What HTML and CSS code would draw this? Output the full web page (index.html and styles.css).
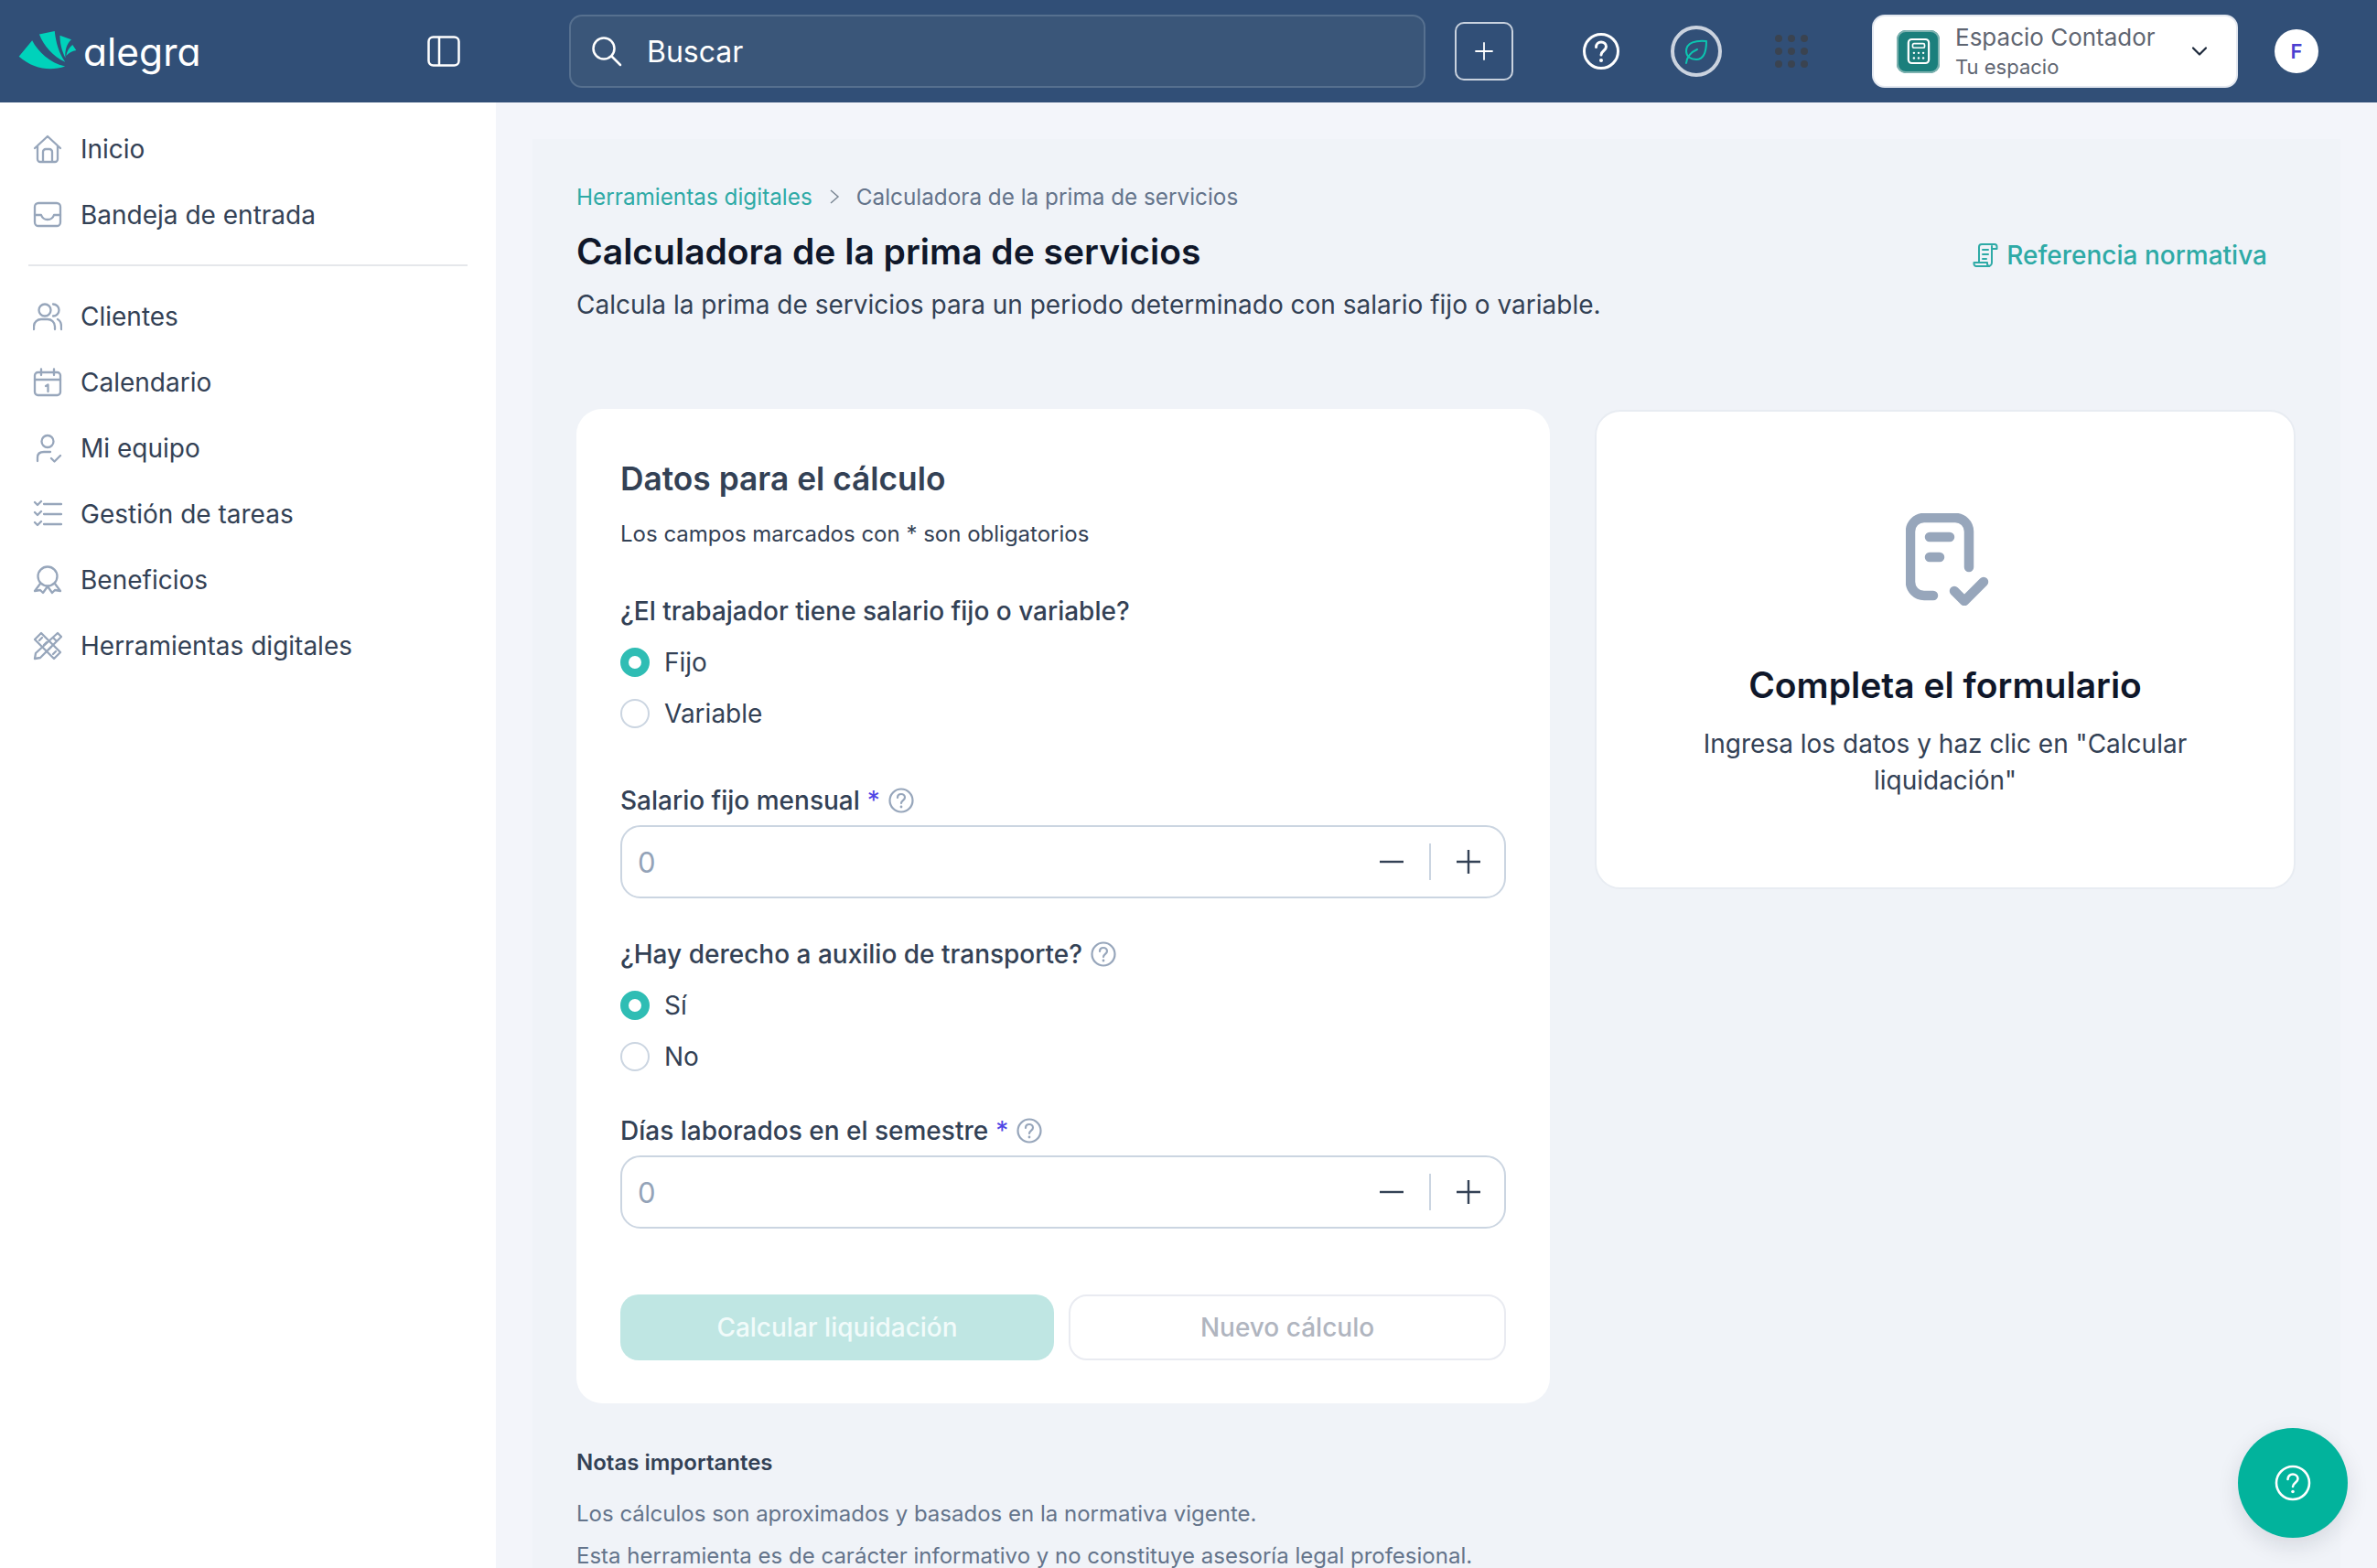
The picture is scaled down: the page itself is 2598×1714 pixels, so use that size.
FILE: index.html
```html
<!DOCTYPE html>
<html lang="es">
<head>
<meta charset="utf-8">
<title>Calculadora de la prima de servicios</title>
<link rel="stylesheet" href="styles.css">
</head>
<body>
<header class="topbar">
  <div class="brand">
    <svg class="brand-mark" viewBox="60 105 190 130"><path fill="#00d2bb" d="M62 190 105 138C125 175 160 210 212 222 165 238 110 232 62 190Z"/><path fill="#00d2bb" d="M128 118 178 108C182 145 192 180 212 208 172 190 143 155 128 118Z"/><path fill="#00d2bb" d="M195 122 232 135C218 148 210 170 213 195 200 170 195 145 195 122Z"/><path fill="#00d2bb" d="M236 152 248 170C235 172 225 178 215 188 218 172 226 160 236 152Z"/></svg>
    <span class="brand-name">alegra</span>
  </div>
  <button class="collapse" aria-label="Menú">
    <svg viewBox="0 0 36 36" class="i36"><rect x="1.5" y="2.5" width="33" height="31" rx="5" fill="none" stroke="#fff" stroke-width="2.5"/><path d="M13 3v30" stroke="#fff" stroke-width="2.5"/></svg>
  </button>
  <div class="search">
    <svg viewBox="0 0 36 36" class="i36"><circle cx="15" cy="15" r="11.5" fill="none" stroke="#fff" stroke-width="2.5"/><path d="M23.5 23.5 33 33" stroke="#fff" stroke-width="2.5" stroke-linecap="round"/></svg>
    <span>Buscar</span>
  </div>
  <button class="add" aria-label="Nuevo"><svg viewBox="0 0 24 24" class="i24"><path d="M12 3v18M3 12h18" stroke="#fff" stroke-width="1.8" stroke-linecap="round"/></svg></button>
  <svg viewBox="0 0 42 42" class="help"><circle cx="21" cy="21" r="18.5" fill="none" stroke="#fff" stroke-width="3"/><path d="M15.5 16.5c0-3.4 2.4-5.5 5.5-5.5s5.5 2 5.5 5c0 4.500-5.500 4.500-5.500 9" fill="none" stroke="#fff" stroke-width="3" stroke-linecap="round"/><circle cx="21" cy="31" r="2" fill="#fff"/></svg>
  <div class="leaf"><svg viewBox="0 0 28 28" class="i28"><path d="M25 3C14 2 3 4 3 14c0 6 5 9 11 9 9 0 11-10 11-20z" fill="none" stroke="#0cc5b0" stroke-width="2" stroke-linejoin="round"/><path d="M3 27c1-8 5-12 12-15" fill="none" stroke="#0cc5b0" stroke-width="2" stroke-linecap="round"/></svg></div>
  <div class="apps"><i></i><i></i><i></i><i></i><i></i><i></i><i></i><i></i><i></i></div>
  <div class="workspace">
    <div class="ws-icon"><svg viewBox="0 0 28 32" width="26" height="30"><rect x="2" y="2" width="24" height="28" rx="4" fill="none" stroke="#fff" stroke-width="2.400"/><rect x="7" y="7" width="14" height="5" rx="1.500" fill="none" stroke="#fff" stroke-width="1.800"/><g fill="#fff"><circle cx="8.500" cy="18" r="1.300"/><circle cx="14" cy="18" r="1.300"/><circle cx="19.500" cy="18" r="1.300"/><circle cx="8.500" cy="24" r="1.300"/><circle cx="14" cy="24" r="1.300"/><circle cx="19.500" cy="24" r="1.300"/></g></svg></div>
    <div class="ws-text"><span class="ws-title">Espacio Contador</span><span class="ws-sub">Tu espacio</span></div>
    <svg viewBox="0 0 20 20" class="chev"><path d="M3 6.500 10 13.500 17 6.500" fill="none" stroke="#1e2a3c" stroke-width="2.200" stroke-linecap="round" stroke-linejoin="round"/></svg>
  </div>
  <div class="avatar">F</div>
</header>

<div class="shell">
  <nav class="sidebar">
    <a class="nav-item"><svg viewBox="0 0 32 32" class="nav-ico"><path d="M2 15 16 2l14 13M5 12.500V27a3 3 0 0 0 3 3h16a3 3 0 0 0 3-3V12.500M11 30V19a3 3 0 0 1 3-3h4a3 3 0 0 1 3 3v11"/></svg>Inicio</a>
    <a class="nav-item"><svg viewBox="0 0 32 32" class="nav-ico"><rect x="2" y="3" width="28" height="25" rx="4"/><path d="M2 16h7c1 3 3 5 7 5s6-2 7-5h7"/></svg>Bandeja de entrada</a>
    <hr class="nav-rule">
    <a class="nav-item"><svg viewBox="0 0 32 32" class="nav-ico"><circle cx="13" cy="9" r="6.500"/><path d="M22 2.500a6.500 6.500 0 0 1 0 13M1 30v-3c0-5 4-8 8-8h7c4 0 8 3 8 8v3M27 19c2 1 4 4 4 8v3"/></svg>Clientes</a>
    <a class="nav-item"><svg viewBox="0 0 32 32" class="nav-ico"><rect x="2" y="5" width="28" height="25" rx="3.500"/><path d="M2 13h28M9 1.500V8M23 1.500V8M14 20l2.500-1.500V26"/></svg>Calendario</a>
    <a class="nav-item"><svg viewBox="0 0 32 32" class="nav-ico"><circle cx="16" cy="8.500" r="6.500"/><path d="M5 30v-4c0-4 3-6 7-6h7M20 27l3.500 3.500L30 24"/></svg>Mi equipo</a>
    <a class="nav-item"><svg viewBox="0 0 32 32" class="nav-ico"><path d="M12 5h19M12 16h19M12 27h19M2 3l3 3 4-4M2 14l3 3 4-4M2 25l3 3 4-4"/></svg>Gestión de tareas</a>
    <a class="nav-item"><svg viewBox="0 0 32 32" class="nav-ico"><circle cx="16" cy="12" r="10.500"/><path d="M8 20 2 28l6-1 3 3 5-7 5 7 3-3 6 1-6-8"/></svg>Beneficios</a>
    <a class="nav-item"><svg viewBox="0 0 32 32" class="nav-ico"><path d="M27 2l4 4L8 29l-6 1 1-6zM22 7l4 4"/><path d="M9 2 2 9l21 21 7-7zM7 10l3-3M12 15l3-3M17 20l3-3M22 25l3-3"/></svg>Herramientas digitales</a>
  </nav>

  <main class="main">
    <div class="panel">
    <div class="page-head">
      <div class="head-text">
        <div class="crumbs"><a class="crumb-link">Herramientas digitales</a><svg viewBox="0 0 12 18" class="crumb-sep"><path d="M2 2l8 7-8 7" fill="none" stroke="#7b8794" stroke-width="1.500"/></svg><span>Calculadora de la prima de servicios</span></div>
        <h1>Calculadora de la prima de servicios</h1>
        <p class="lead">Calcula la prima de servicios para un periodo determinado con salario fijo o variable.</p>
      </div>
      <a class="ref-link"><svg viewBox="0 0 28 28" class="i28"><path d="M7 22V5a3 3 0 0 1 3-3h14a2.500 2.500 0 0 1 2.500 2.500V7H21M21 4v18a4 4 0 0 1-4 4H4a2.500 2.500 0 0 1-2.500-2.500V22H16v1.500a2.500 2.500 0 0 0 2.500 2.500M11 8h6M11 13h6M11 18h4" fill="none" stroke="#2eaaa6" stroke-width="2" stroke-linecap="round" stroke-linejoin="round"/></svg>Referencia normativa</a>
    </div>

    <div class="columns">
      <div class="column-left">
        <section class="card form-card">
          <h2>Datos para el cálculo</h2>
          <p class="hint">Los campos marcados con * son obligatorios</p>

          <div class="label first">¿El trabajador tiene salario fijo o variable?</div>
          <div class="radios">
            <div class="radio on"><span class="dot"></span>Fijo</div>
            <div class="radio"><span class="dot"></span>Variable</div>
          </div>

          <div class="label gap-a">Salario fijo mensual <span class="req">*</span><svg viewBox="0 0 28 28" class="q"><use href="#qmark"/></svg></div>
          <div class="number"><span class="zero">0</span><span class="steps"><svg viewBox="0 0 28 28" class="i28"><path d="M1 14h26" stroke="#334155" stroke-width="2.400"/></svg><i></i><svg viewBox="0 0 28 28" class="i28"><path d="M1 14h26M14 1v26" stroke="#334155" stroke-width="2.400"/></svg></span></div>

          <div class="label gap-b">¿Hay derecho a auxilio de transporte?<svg viewBox="0 0 28 28" class="q"><use href="#qmark"/></svg></div>
          <div class="radios">
            <div class="radio on"><span class="dot"></span>Sí</div>
            <div class="radio"><span class="dot"></span>No</div>
          </div>

          <div class="label gap-c">Días laborados en el semestre <span class="req">*</span><svg viewBox="0 0 28 28" class="q"><use href="#qmark"/></svg></div>
          <div class="number"><span class="zero">0</span><span class="steps"><svg viewBox="0 0 28 28" class="i28"><path d="M1 14h26" stroke="#334155" stroke-width="2.400"/></svg><i></i><svg viewBox="0 0 28 28" class="i28"><path d="M1 14h26M14 1v26" stroke="#334155" stroke-width="2.400"/></svg></span></div>

          <div class="actions">
            <button class="btn primary">Calcular liquidación</button>
            <button class="btn ghost">Nuevo cálculo</button>
          </div>
        </section>
        <section class="notes">
          <h3>Notas importantes</h3>
          <p>Los cálculos son aproximados y basados en la normativa vigente.</p>
          <p>Esta herramienta es de carácter informativo y no constituye asesoría legal profesional.</p>
        </section>
      </div>
      <aside class="card empty-card">
        <svg viewBox="0 0 91 101" class="doc"><path d="M30 90H20A15 15 0 0 1 5 75V20A15 15 0 0 1 20 5H54A15 15 0 0 1 69 20V59M26 26H48M26 48H37M53 85 64 96 85 75" fill="none" stroke="#97a6bb" stroke-width="10.500" stroke-linecap="round" stroke-linejoin="round"/></svg>
        <h2 class="empty-title">Completa el formulario</h2>
        <p class="empty-text">Ingresa los datos y haz clic en "Calcular liquidación"</p>
      </aside>
    </div>
    </div>
  </main>
</div>

<button class="fab" aria-label="Ayuda"><svg viewBox="0 0 40 40" class="fab-ico"><circle cx="20" cy="20" r="18" fill="none" stroke="#fff" stroke-width="2.600"/><path d="M14.500 16c0-3.500 2.500-5.500 5.500-5.500s5.500 2 5.500 5c0 4-5.500 4.500-5.500 8.500" fill="none" stroke="#fff" stroke-width="2.600" stroke-linecap="round"/><circle cx="20" cy="29.500" r="1.800" fill="#fff"/></svg></button>

<svg class="defs" aria-hidden="true"><defs><g id="qmark"><circle cx="14" cy="14" r="12.500" fill="none" stroke="#97a6bb" stroke-width="2.200"/><path d="M10 11c0-2.600 1.800-4 4-4s4 1.500 4 3.700c0 3-4 3.300-4 6.300" fill="none" stroke="#97a6bb" stroke-width="2.200" stroke-linecap="round"/><circle cx="14" cy="21" r="1.400" fill="#97a6bb"/></g></defs></svg>
</body>
</html>
```
FILE: styles.css
```css
* { box-sizing: border-box; }
html, body { margin: 0; padding: 0; }
body {
  width: 2598px;
  height: 1714px;
  overflow: hidden;
  position: relative;
  font-family: Inter, "Noto Sans", sans-serif;
  color: #334155;
  background: #f3f5fa;
}
button { font: inherit; border: 0; background: none; padding: 0; }
svg { display: block; flex: none; }
.defs { width: 0; height: 0; position: absolute; }
.i24 { width: 24px; height: 24px; }
.i28 { width: 28px; height: 28px; }
.i36 { width: 36px; height: 36px; }

.topbar {
  height: 112px;
  background: #314f77;
  display: flex;
  align-items: center;
}
.brand { width: 467px; display: flex; align-items: center; padding-left: 20px; gap: 7px; }
.brand-mark { width: 64px; height: 44px; margin-top: -2px; }
.brand-name {
  font-family: Inter, sans-serif;
  font-feature-settings: "cv11" 1;
  font-size: 42.500px;
  line-height: 50px;
  color: #fff;
  margin-top: 2px;
}
.collapse { width: 38px; height: 36px; margin-right: 117px; }
.search {
  width: 936px;
  height: 80px;
  background: #3a5679;
  border: 2px solid #56708f;
  border-radius: 14px;
  display: flex;
  align-items: center;
  gap: 26px;
  padding-left: 21px;
  color: #fff;
  font-size: 32px;
  margin-right: 32px;
}
.add {
  width: 64px; height: 64px;
  border: 2px solid #c9d2de;
  border-radius: 10px;
  display: flex; align-items: center; justify-content: center;
  margin-right: 75px;
}
.help { width: 42px; height: 42px; margin-right: 55px; }
.leaf {
  width: 56px; height: 56px;
  border: 4px solid #cbd3df;
  border-radius: 50%;
  display: flex; align-items: center; justify-content: center;
  margin-right: 58px;
}
.apps { width: 36px; display: grid; grid-template-columns: repeat(3, 8px); gap: 6px; margin-right: 70px; }
.apps i { width: 8px; height: 8px; border-radius: 50%; background: #3a4350; }
.workspace {
  width: 400px; height: 80px;
  background: #fff;
  border: 2px solid #e3e8f0;
  border-radius: 14px;
  display: flex; align-items: center;
  padding-left: 25px;
  margin-right: 40px;
}
.ws-icon {
  width: 47px; height: 47px; border-radius: 10px;
  background: #1b7f7c;
  box-shadow: inset 0 0 0 2px #7eb2b0;
  display: flex; align-items: center; justify-content: center;
  margin-right: 17px;
}
.ws-text { display: flex; flex-direction: column; width: 254px; padding-bottom: 2px; }
.ws-title { font-size: 26px; line-height: 36px; color: #5f6672; }
.ws-sub { font-size: 22px; line-height: 28px; color: #5f6672; }
.chev { width: 20px; height: 20px; margin-left: 3px; }
.avatar {
  width: 48px; height: 48px; border-radius: 50%;
  background: #fff; color: #4c3fd1;
  font-size: 22px; font-weight: 600;
  display: flex; align-items: center; justify-content: center;
}

.shell { display: flex; height: 1602px; }
.sidebar {
  width: 542px;
  background: #fff;
  padding: 15px 31px 0;
  flex: none;
}
.nav-item {
  height: 72px;
  display: flex;
  align-items: center;
  gap: 20px;
  padding-left: 5px;
  font-size: 28px;
  color: #334155;
}
.nav-ico {
  width: 32px; height: 32px;
  fill: none; stroke: #97a6bb; stroke-width: 2.300; stroke-linecap: round; stroke-linejoin: round;
}
.nav-rule { border: 0; height: 2px; background: #e5e7eb; margin: 18px 0 19px; }

.main { flex: 1; padding: 40px 40px 0; overflow: hidden; }
.panel { height: 1600px; background: #f0f3f8; padding: 46px 49px 0 48px; }
.page-head { display: flex; justify-content: space-between; align-items: flex-start; }
.crumbs { display: flex; align-items: center; font-size: 24.300px; line-height: 34px; color: #64748b; }
.crumb-link { color: #2eaaa6; }
.crumb-sep { width: 12px; height: 18px; margin: 0 18px; }
h1 { margin: 17px 0 0; font-size: 39px; line-height: 52px; font-weight: 600; color: #0f172a; }
.lead { margin: 11px 0 0; font-size: 28px; line-height: 42px; color: #334155; }
.ref-link {
  display: flex; align-items: center; gap: 9px;
  font-size: 28px; font-weight: 500; color: #2eaaa6;
  margin-top: 64px; margin-right: 31px;
}
.columns { display: flex; gap: 49px; align-items: flex-start; margin-top: 93px; }
.column-left { width: 1064px; flex: none; }
.card { background: #fff; border-radius: 28px; }
.form-card { padding: 51px 48px 48px; height: 1087px; }
.form-card h2 { margin: 0; font-size: 35.300px; line-height: 52px; font-weight: 600; color: #334155; }
.hint { margin: 17px 0 0; font-size: 24px; line-height: 34px; color: #334155; }
.label {
  display: flex; align-items: center;
  font-size: 28px; line-height: 40px; font-weight: 500; color: #334155;
}
.req { color: #4f46e5; margin-left: 8px; font-weight: 400; }
.q { width: 28px; height: 28px; margin-left: 9px; }
.label.first { margin-top: 47px; }
.gap-a { margin-top: 59px; }
.gap-b { margin-top: 41px; }
.gap-c { margin-top: 45px; }
.radios { margin-top: 20px; display: flex; flex-direction: column; gap: 24px; }
.radio { display: flex; align-items: center; gap: 16px; font-size: 28px; line-height: 32px; height: 32px; color: #334155; }
.dot { width: 32px; height: 32px; border-radius: 50%; border: 2px solid #cbd5e1; background: #fff; flex: none; }
.radio.on .dot { border: 9px solid #2fbdb4; }
.number {
  height: 80px; margin-top: 7px;
  border: 2.500px solid #cbd5e1;
  border-radius: 22px;
  display: flex; align-items: center; justify-content: space-between;
  padding: 0 25px 0 17px;
}
.zero { font-size: 31px; color: #94a3b8; }
.steps { display: flex; align-items: center; gap: 27px; }
.steps i { width: 2px; height: 40px; background: #cbd5e1; }
.actions { display: flex; gap: 16px; margin-top: 72px; }
.btn { height: 72px; border-radius: 20px; font-size: 28px; font-weight: 500; }
.primary { width: 474px; background: #bfe6e3; color: #f1fbfa; }
.ghost { flex: 1; background: #fff; border: 2px solid #e9ebf1; color: #b0b5bf; }
.notes { margin-top: 48px; }
.notes h3 { margin: 0; font-size: 24px; line-height: 34px; font-weight: 600; color: #334155; }
.notes p { margin: 12px 0 0; font-size: 24px; line-height: 34px; color: #64748b; }
.notes h3 + p { margin-top: 22px; }
.empty-card {
  flex: 1;
  height: 524px;
  margin-top: 1px;
  border: 2px solid #e8ecf2;
  display: flex; flex-direction: column; align-items: center;
  padding: 111px 60px 0;
  text-align: center;
}
.doc { width: 91px; height: 101px; margin-left: 4px; }
.empty-title { margin: 60px 0 0; font-size: 39px; line-height: 54px; font-weight: 600; color: #0f172a; }
.empty-text { margin: 17px 0 0; font-size: 28px; line-height: 40px; color: #334155; width: 600px; }

.fab {
  position: absolute;
  left: 2446px; top: 1561px;
  width: 120px; height: 120px;
  border-radius: 50%;
  background: #02b39c;
  box-shadow: 0 8px 24px rgba(15, 23, 42, 0.12);
  display: flex; align-items: center; justify-content: center;
}
.fab-ico { width: 40px; height: 40px; }
```
